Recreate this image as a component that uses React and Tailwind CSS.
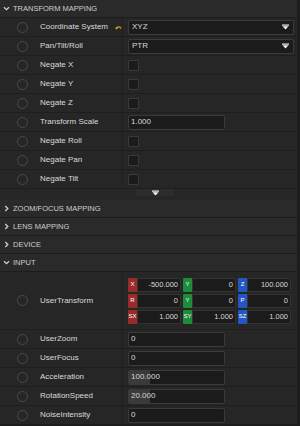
import React from "react";

const font = { fontFamily: '"Liberation Sans", Arial, sans-serif' };

function Chevron({ open }) {
  return (
    <svg width="7" height="7" viewBox="0 0 7 7" className="shrink-0">
      {open ? (
        <path d="M1 2.2 L3.5 4.7 L6 2.2" stroke="#cfcfcf" strokeWidth="1.3" fill="none" />
      ) : (
        <path d="M2.3 1 L4.8 3.5 L2.3 6" stroke="#cfcfcf" strokeWidth="1.3" fill="none" />
      )}
    </svg>
  );
}

function DropArrow() {
  return (
    <svg width="7" height="6" viewBox="0 0 7 6">
      <rect x="0" y="0.5" width="7" height="1.2" fill="#f2f2f2" />
      <path d="M0.5 2.2 L6.5 2.2 L3.5 5.4 Z" fill="#f2f2f2" />
    </svg>
  );
}

function Section({ title, open }) {
  return (
    <div className="flex h-[18px] items-center gap-[3px] whitespace-nowrap border-b border-[#1c1c1c] bg-[#2a2a2a] pl-[3px] text-[7.5px] text-[#cdcdcd]">
      <Chevron open={open} />
      <span>{title}</span>
    </div>
  );
}

function Row({ label, icon, children, tall }) {
  return (
    <div
      className={`flex ${tall ? "h-[58px]" : "h-[19px]"} border-b border-[#1e1e1e] bg-[#262626]`}
    >
      <div className="flex w-[122px] shrink-0 items-center whitespace-nowrap">
        <div className="ml-[17px] h-[11px] w-[11px] shrink-0 rounded-full border border-[#4a4a4a]" />
        <span className="ml-[12px] text-[8px] text-[#dadada]">{label}</span>
        {icon ? <span className="ml-[7px] flex">{icon}</span> : null}
      </div>
      <div className="flex flex-1 items-center border-l border-[#202020] pl-[5px] pr-[3px]">
        {children}
      </div>
    </div>
  );
}

function ResetIcon() {
  return (
    <svg width="7" height="5" viewBox="0 0 7 5">
      <path d="M1.5 3.8 C1.8 1.6 5 1.2 6 3.5" stroke="#e0a526" strokeWidth="1.2" fill="none" />
      <path d="M0 2.4 L3 2.4 L1.5 4.8 Z" fill="#e0a526" />
    </svg>
  );
}

function Select({ value }) {
  return (
    <div className="flex h-[15px] w-full items-center justify-between rounded-[2px] border border-[#3a3a3a] bg-[#1b1b1b] pl-[3px] pr-[4px] text-[8px] text-[#d8d8d8]">
      <span>{value}</span>
      <DropArrow />
    </div>
  );
}

function Checkbox() {
  return <div className="h-[11px] w-[11px] rounded-[1px] border border-[#3a3a3a] bg-[#1b1b1b]" />;
}

function NumberField({ value, fill }) {
  return (
    <div className="relative flex h-[15px] w-[97px] items-center overflow-hidden rounded-[2px] border border-[#3a3a3a] bg-[#1b1b1b] pl-[2px] text-[8px] text-[#d8d8d8]">
      {fill ? <div className="absolute inset-y-0 left-0 w-[21px] bg-[#3a3a3a]" /> : null}
      <span className="relative">{value}</span>
    </div>
  );
}

function Vec({ tag, color, value }) {
  return (
    <div className="flex h-[14px] w-[53px]">
      <div
        className={`flex w-[9px] shrink-0 items-center justify-center rounded-l-[1px] text-[6px] text-white ${color}`}
      >
        {tag}
      </div>
      <div className="flex flex-1 items-center justify-end rounded-r-[2px] border border-[#333] bg-[#1b1b1b] pr-[2px] text-[7.5px] text-[#d8d8d8]">
        {value}
      </div>
    </div>
  );
}

const red = "bg-[#9a2b2b]";
const green = "bg-[#1e8c3a]";
const blue = "bg-[#2456c2]";

export default function App() {
  const vecRows = [
    [["X", red, "-500.000"], ["Y", green, "0"], ["Z", blue, "100.000"]],
    [["R", red, "0"], ["Y", green, "0"], ["P", blue, "0"]],
    [["SX", red, "1.000"], ["SY", green, "1.000"], ["SZ", blue, "1.000"]],
  ];

  return (
    <div className="h-[426px] w-[300px] overflow-hidden bg-[#1d1d1d]" style={font}>
      <div className="w-[297px]">
        <Section title="TRANSFORM MAPPING" open />
        <Row label="Coordinate System" icon={<ResetIcon />}>
          <Select value="XYZ" />
        </Row>
        <Row label="Pan/Tilt/Roll">
          <Select value="PTR" />
        </Row>
        <Row label="Negate X">
          <Checkbox />
        </Row>
        <Row label="Negate Y">
          <Checkbox />
        </Row>
        <Row label="Negate Z">
          <Checkbox />
        </Row>
        <Row label="Transform Scale">
          <NumberField value="1.000" />
        </Row>
        <Row label="Negate Roll">
          <Checkbox />
        </Row>
        <Row label="Negate Pan">
          <Checkbox />
        </Row>
        <Row label="Negate Tilt">
          <Checkbox />
        </Row>
        <div className="flex h-[11px] bg-[#262626] pl-[136px]">
          <div className="flex h-[7px] w-[38px] items-center justify-center bg-[#2c2c2c]">
            <DropArrow />
          </div>
        </div>
        <Section title="ZOOM/FOCUS MAPPING" />
        <Section title="LENS MAPPING" />
        <Section title="DEVICE" />
        <Section title="INPUT" open />
        <Row label="UserTransform" tall>
          <div className="flex flex-col gap-[2px]">
            {vecRows.map((r, i) => (
              <div key={i} className="flex gap-[2px]">
                {r.map(([tag, color, value], j) => (
                  <Vec key={j} tag={tag} color={color} value={value} />
                ))}
              </div>
            ))}
          </div>
        </Row>
        <Row label="UserZoom">
          <NumberField value="0" />
        </Row>
        <Row label="UserFocus">
          <NumberField value="0" />
        </Row>
        <Row label="Acceleration">
          <NumberField value="100.000" fill />
        </Row>
        <Row label="RotationSpeed">
          <NumberField value="20.000" fill />
        </Row>
        <Row label="NoiseIntensity">
          <NumberField value="0" />
        </Row>
      </div>
    </div>
  );
}
